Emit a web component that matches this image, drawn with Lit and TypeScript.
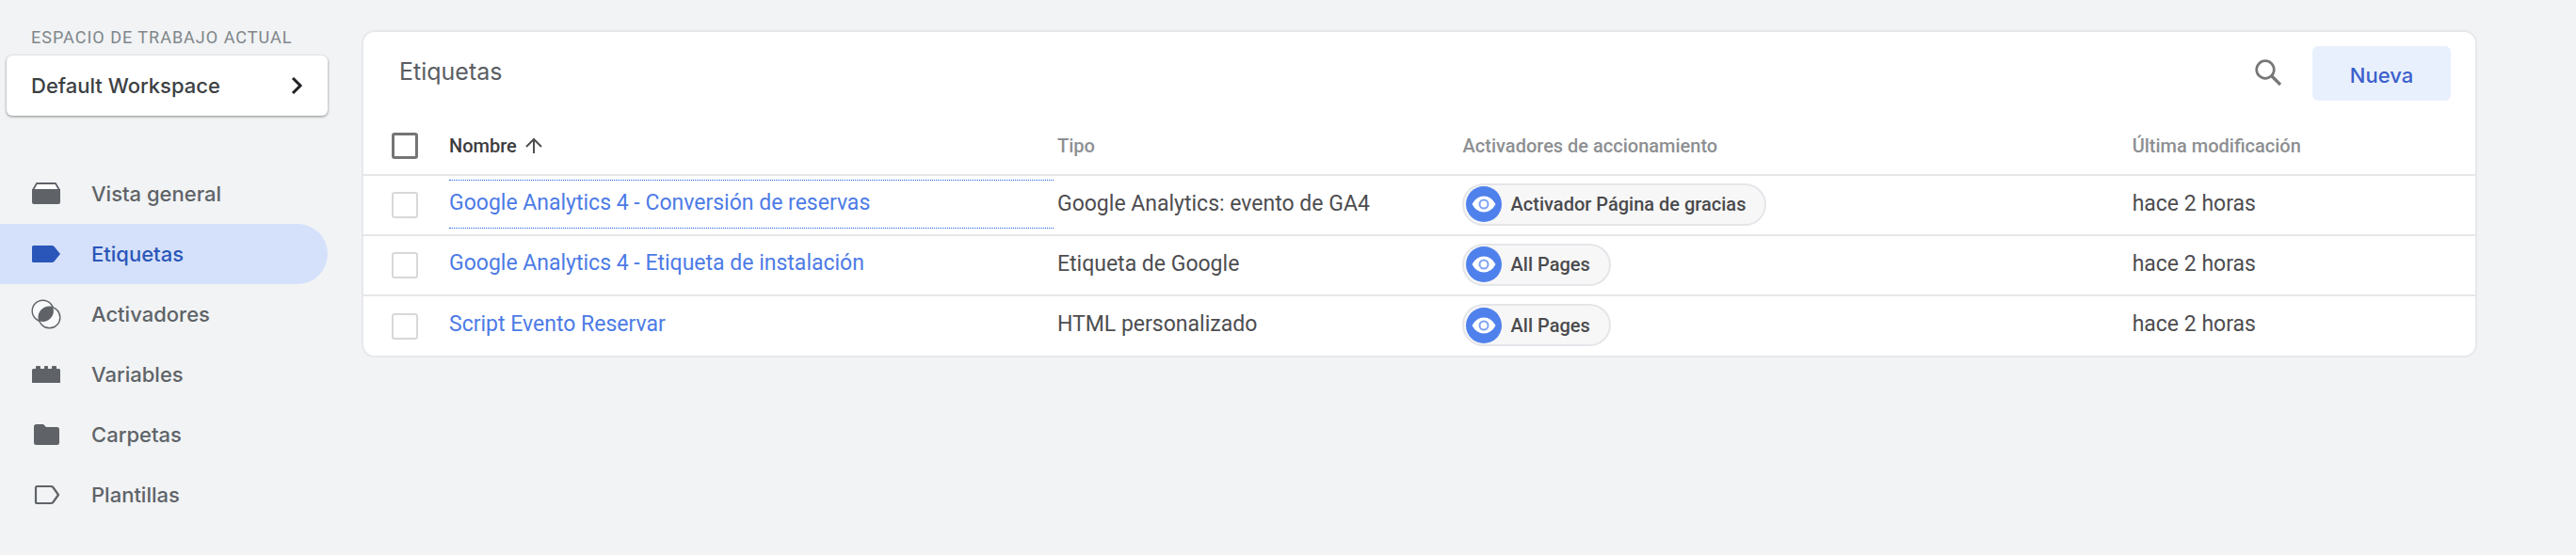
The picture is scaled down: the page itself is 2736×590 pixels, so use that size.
import { LitElement, html, css, svg } from "lit";
import { customElement, property } from "lit/decorators.js";
import { classMap } from "lit/directives/class-map.js";

const icons = {
  overview: svg`<path d="M2 12L6 5h20l4 7" fill="#fff" stroke="currentColor" stroke-width="1.800" stroke-linejoin="round"/><path d="M1 11h30v14q0 2-2 2H3q-2 0-2-2z" fill="currentColor"/>`,
  tag: svg`<path d="M1 8.500Q1 7 2.500 7H22q1.500 0 2.500 1L31 16l-6.500 8q-1 1-2.500 1H2.500Q1 25 1 23.500z" fill="currentColor"/>`,
  triggers: svg`<circle cx="12.500" cy="12.500" r="11.300" fill="#f8f9fa" stroke="currentColor" stroke-width="1.400"/><circle cx="19.500" cy="19.500" r="11.300" fill="#f8f9fa" stroke="currentColor" stroke-width="1.400"/><path d="M23.200 8.800A11.300 11.300 0 0 0 8.800 23.200A11.300 11.300 0 0 0 23.200 8.800z" fill="currentColor"/>`,
  variables: svg`<path d="M1 11.500Q1 10 2.500 10H5V8q0-1 1-1h3q1 0 1 1v2h4V8q0-1 1-1h2q1 0 1 1v2h4V8q0-1 1-1h3q1 0 1 1v2h2.500q1.500 0 1.500 1.500V25H1z" fill="currentColor"/>`,
  folder: svg`<path d="M5.500 5h7.500l3 3h11.500Q30 8 30 10.500v14q0 2.500-2.500 2.500h-22Q3 27 3 24.500v-17Q3 5 5.500 5z" fill="currentColor"/>`,
  template: svg`<path d="M6.500 7H21q1.500 0 2.300 1L29 16l-5.700 8q-.8 1-2.300 1H6.500Q5 25 5 23.500v-15Q5 7 6.500 7z" fill="none" stroke="currentColor" stroke-width="2.200" stroke-linejoin="round"/>`,
};

type IconName = keyof typeof icons;

@customElement("side-nav")
class SideNav extends LitElement {
  static styles = css`
    :host {
      display: block;
      font-family: Inter, sans-serif;
    }
    .label {
      margin: 0 0 9px;
      padding: 30px 0 0 33px;
      font: 400 18px/20px Roboto, sans-serif;
      letter-spacing: 1px;
      text-transform: uppercase;
      color: #80868b;
    }
    .workspace {
      display: flex;
      align-items: center;
      justify-content: space-between;
      box-sizing: border-box;
      width: calc(100% - 7px);
      height: 64px;
      margin: 0 0 0 7px;
      padding: 0 26px;
      border: 0;
      border-radius: 6px;
      background: #fff;
      box-shadow: 0 1px 3px rgba(60, 64, 67, 0.6);
      font: 500 22px/32px Inter, sans-serif;
      color: #3c4043;
    }
    .chevron {
      width: 14px;
      height: 20px;
    }
    .list {
      margin: 51px 0 0;
      padding: 0;
      list-style: none;
    }
    .item {
      display: flex;
      align-items: center;
      gap: 32px;
      height: 64px;
      padding-left: 33px;
      border-radius: 0 32px 32px 0;
      font-size: 22px;
      font-weight: 500;
      line-height: 32px;
      color: #5f6368;
      text-decoration: none;
    }
    .item.active {
      background: #d5e1fa;
      color: #2a56b9;
    }
    .icon {
      flex: none;
      width: 32px;
      height: 32px;
    }
  `;

  private items: { icon: IconName; text: string; active?: boolean }[] = [
    { icon: "overview", text: "Vista general" },
    { icon: "tag", text: "Etiquetas", active: true },
    { icon: "triggers", text: "Activadores" },
    { icon: "variables", text: "Variables" },
    { icon: "folder", text: "Carpetas" },
    { icon: "template", text: "Plantillas" },
  ];

  render() {
    return html`
      <p class="label" id="workspace-label">Espacio de trabajo actual</p>
      <button class="workspace" aria-describedby="workspace-label">
        Default Workspace
        <svg class="chevron" viewBox="0 0 14 20" aria-hidden="true">
          <path d="M3 2l8 8-8 8" fill="none" stroke="#202124" stroke-width="3" />
        </svg>
      </button>
      <nav>
        <ul class="list">
          ${this.items.map(
            (i) => html`<li>
              <a class=${classMap({ item: true, active: !!i.active })} href="#">
                <svg class="icon" viewBox="0 0 32 32" aria-hidden="true">${icons[i.icon]}</svg>
                ${i.text}
              </a>
            </li>`
          )}
        </ul>
      </nav>
    `;
  }
}

@customElement("trigger-chip")
class TriggerChip extends LitElement {
  static styles = css`
    :host {
      display: flex;
    }
    .chip {
      display: flex;
      align-items: center;
      gap: 10px;
      box-sizing: border-box;
      height: 45px;
      padding: 0 20px 0 2px;
      border: 2px solid #e4e6e9;
      border-radius: 23px;
      background: #f7f7f7;
      font: 500 20px/24px Roboto, sans-serif;
      color: #4a4a4d;
    }
    .eye {
      width: 38px;
      height: 38px;
    }
  `;

  @property() name = "";

  render() {
    return html`<button class="chip">
      <svg class="eye" viewBox="0 0 38 38" aria-hidden="true">
        <circle cx="19" cy="19" r="19" fill="#4f81ec" />
        <path d="M6.500 19Q11 10.500 19 10.500T31.500 19Q27 27.500 19 27.500T6.500 19z" fill="#fff" />
        <circle cx="19" cy="19" r="4.500" fill="#fff" stroke="#7fa3f1" stroke-width="2" />
      </svg>
      ${this.name}
    </button>`;
  }
}

@customElement("tags-card")
class TagsCard extends LitElement {
  static styles = css`
    :host {
      display: block;
      border: 2px solid #e6e8eb;
      border-radius: 14px;
      background: #fff;
      overflow: hidden;
    }
    .head {
      display: flex;
      align-items: flex-start;
      height: 91px;
      box-sizing: border-box;
      padding: 15px 26px 0 38px;
    }
    .title {
      flex: 1;
      margin: 11px 0 0;
      font: 400 25px/32px Inter, sans-serif;
      color: #5a5d62;
    }
    .search {
      display: flex;
      margin: 14px 32px 0 0;
      padding: 0;
      border: 0;
      background: none;
    }
    .glass {
      width: 29px;
      height: 29px;
    }
    .create {
      width: 147px;
      height: 58px;
      padding: 3px 0 0;
      border: 0;
      border-radius: 6px;
      background: #e9f0fd;
      font: 500 22px/32px Inter, sans-serif;
      color: #3b5fcb;
    }
    .table {
      width: 100%;
      border-collapse: collapse;
      table-layout: fixed;
      font: 400 23px/26px Roboto, sans-serif;
      color: #4d4d50;
    }
    .check {
      width: 91px;
    }
    .name {
      width: 28.8%;
    }
    .type {
      width: 19.2%;
    }
    .triggers {
      width: 31.7%;
    }
    .table th {
      height: 60px;
      padding: 0;
      text-align: left;
      font-size: 20px;
      font-weight: 500;
      color: #8d8f92;
    }
    .table td {
      box-sizing: border-box;
      height: 64px;
      padding: 0;
      border-top: 2px solid #e6e7ea;
    }
    .sort {
      display: flex;
      align-items: center;
      gap: 8px;
      padding: 0;
      border: 0;
      background: none;
      font: inherit;
      color: #3c3c40;
    }
    .arrow {
      width: 20px;
      height: 18px;
    }
    .box {
      display: block;
      box-sizing: border-box;
      appearance: none;
      width: 28px;
      height: 28px;
      margin: 0 0 0 30px;
      border: 2px solid #d8d8d8;
      border-radius: 3px;
      background: #fff;
    }
    .box.all {
      border: 3px solid #757575;
    }
    .link {
      display: block;
      margin: 0 4px 2px 0;
      padding: 11px 0 13px;
      border: 1px solid transparent;
      border-width: 1px 0;
      color: #4d7be6;
      text-decoration: none;
    }
    .link.focused {
      border-style: dotted;
      border-color: #1f5fe8;
    }
    .chips {
      margin: 0 0 2px -1px;
    }
    .text {
      display: block;
      padding-bottom: 3px;
    }
  `;

  private rows = [
    { name: "Google Analytics 4 - Conversión de reservas", type: "Google Analytics: evento de GA4", trigger: "Activador Página de gracias", focused: true },
    { name: "Google Analytics 4 - Etiqueta de instalación", type: "Etiqueta de Google", trigger: "All Pages", focused: false },
    { name: "Script Evento Reservar", type: "HTML personalizado", trigger: "All Pages", focused: false },
  ];

  render() {
    return html`
      <header class="head">
        <h1 class="title">Etiquetas</h1>
        <button class="search" aria-label="Buscar">
          <svg class="glass" viewBox="0 0 29 29" aria-hidden="true">
            <circle cx="11" cy="11" r="9.300" fill="none" stroke="#777" stroke-width="2.700" />
            <path d="M17.500 17.500L27 27" stroke="#777" stroke-width="3.200" />
          </svg>
        </button>
        <button class="create">Nueva</button>
      </header>
      <table class="table">
        <thead>
          <tr>
            <th class="check"><input class="box all" type="checkbox" aria-label="Seleccionar todo" /></th>
            <th class="name" aria-sort="ascending">
              <button class="sort">
                Nombre
                <svg class="arrow" viewBox="0 0 20 18" aria-hidden="true">
                  <path d="M10 17V2M2 10l8-8 8 8" fill="none" stroke="#505053" stroke-width="2" />
                </svg>
              </button>
            </th>
            <th class="type">Tipo</th>
            <th class="triggers">Activadores de accionamiento</th>
            <th>Última modificación</th>
          </tr>
        </thead>
        <tbody>
          ${this.rows.map(
            (r) => html`<tr>
              <td><input class="box" type="checkbox" aria-label=${r.name} /></td>
              <td><a class=${classMap({ link: true, focused: r.focused })} href="#">${r.name}</a></td>
              <td><span class="text">${r.type}</span></td>
              <td><trigger-chip class="chips" name=${r.trigger}></trigger-chip></td>
              <td><span class="text">hace 2 horas</span></td>
            </tr>`
          )}
        </tbody>
      </table>
    `;
  }
}

@customElement("app-root")
class AppRoot extends LitElement {
  static styles = css`
    :host {
      display: grid;
      grid-template-columns: 348px minmax(0, 1fr);
      gap: 36px;
      align-items: start;
      box-sizing: border-box;
      min-height: 100vh;
      padding-right: 105px;
      background: #f1f3f4;
    }
    .main {
      padding: 32px 0;
    }
  `;

  render() {
    return html`
      <side-nav></side-nav>
      <main class="main"><tags-card></tags-card></main>
    `;
  }
}
